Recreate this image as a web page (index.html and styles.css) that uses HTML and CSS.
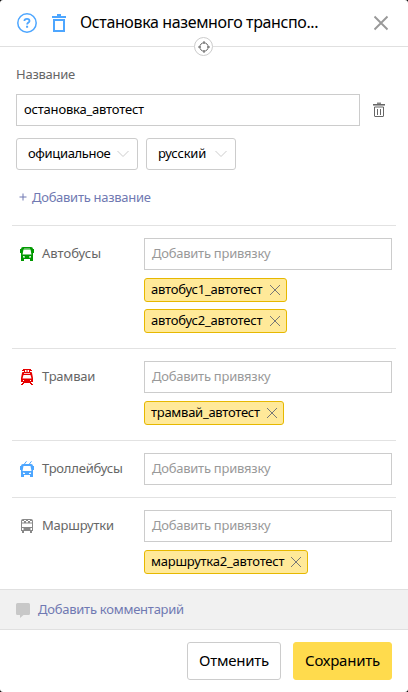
FILE: index.html
```html
<!DOCTYPE html>
<html lang="ru">
<head>
<meta charset="utf-8">
<title>Остановка</title>
<link rel="stylesheet" href="styles.css">
</head>
<body>
<svg class="defs" width="0" height="0">
  <symbol id="cross" viewBox="0 0 12 12"><path d="M1 1l10 10M11 1L1 11" fill="none" stroke="currentColor"/></symbol>
  <symbol id="chevron" viewBox="0 0 12 8"><path d="M.5 1L6 6.500 11.500 1" fill="none" stroke="currentColor"/></symbol>
</svg>
<main class="panel">
  <header class="header">
    <svg class="help" width="20" height="20" viewBox="0 0 20 20"><circle cx="10" cy="10" r="9.200" fill="none" stroke="currentColor" stroke-width="1.500"/><path d="M7.400 8C7.400 6.600 8.400 5.800 10 5.800s2.500.8 2.500 2.100c0 1.700-2.400 1.700-2.400 3.700" fill="none" stroke="currentColor" stroke-width="1.800"/><path d="M9.100 12.800h2v2h-2z" fill="currentColor"/></svg>
    <svg class="trash" width="14" height="18" viewBox="0 0 14 18"><path d="M0 2h5V0h4v2h5v2H0zM1 5h12v13H1zM3 7v9h8V7z" fill="currentColor" fill-rule="evenodd"/></svg>
    <h1 class="title">Остановка наземного транспо...</h1>
    <svg class="close" width="16" height="16" viewBox="0 0 16 16"><path d="M1.500 1.500l13 13M14.500 1.500l-13 13" stroke="currentColor" stroke-width="1.900"/></svg>
    <span class="target"><svg width="12" height="12" viewBox="0 0 12 12" fill="none" stroke="currentColor"><circle cx="6" cy="6" r="4.200"/><path d="M6 0v3M6 9v3M0 6h3M9 6h3"/></svg></span>
  </header>

  <section class="names">
    <div class="caption">Название</div>
    <div class="name-row">
      <div class="input name">остановка_автотест</div>
      <svg class="remove" width="12" height="16" viewBox="0 0 12 16"><path d="M4 .5h4V2H4z" fill="#888"/><path d="M0 2h12v1H0z" fill="#666"/><path d="M0 3h12v1H0z" fill="#aaa"/><path d="M1.500 5v9q0 .5.500.5h8q.5 0 .5-.5V5zM4.500 7v6M7.500 7v6" fill="none" stroke="#666"/></svg>
    </div>
    <div class="selects">
      <div class="select select-type"><span>официальное</span><svg width="12" height="8"><use href="#chevron"/></svg></div>
      <div class="select select-lang"><span>русский</span><svg width="12" height="8"><use href="#chevron"/></svg></div>
    </div>
    <div class="add"><svg width="8" height="8" viewBox="0 0 8 8"><path d="M4 .5v7M.5 4h7" stroke="currentColor"/></svg><span>Добавить название</span></div>
  </section>

  <section class="routes">
    <div class="route">
      <div class="kind"><svg class="bus" width="14" height="14" viewBox="0 0 14 14"><path fill="currentColor" fill-rule="evenodd" d="M3 0h8q2 0 2 2h1v4h-1v1.500V14h-3v-2H4v2H1V6H0V2h1q0-2 2-2zM3.500 2.500L2.500 7.500h9l-1-5zM3 9v1.500h2V9.500zM11 9L9 9.500v1h2z"/><path d="M4 1h6v.6H4z" fill="#fff" fill-opacity=".7"/></svg><span class="bus-label">Автобусы</span></div>
      <div class="links">
        <div class="input hint">Добавить привязку</div>
        <div class="tags"><span class="tag tag-bus"><span>автобус1_автотест</span><svg width="12" height="12"><use href="#cross"/></svg></span><span class="tag tag-bus"><span>автобус2_автотест</span><svg width="12" height="12"><use href="#cross"/></svg></span></div>
      </div>
    </div>
    <div class="route">
      <div class="kind"><svg class="tram" width="14" height="16" viewBox="0 0 14 16"><path fill="currentColor" fill-rule="evenodd" d="M3 0h8v1h1v1h-2v1h1.500l.5 1 1 5v4h-2v1h1v1h1v1h-2v-1h-1v-1H4v1H3v1H1v-1h1v-1h1v-1H1V9l1-5 .5-1H4V2H2V1h1zM5 1v2h1.500V1zM7.500 1v2H9V1zM4 4.300v.7h6v-.7zM3.500 6L2.500 9.500h9l-1-3.500zM3 11v1h1v-1zM10 11v1h1v-1z"/></svg><span>Трамваи</span></div>
      <div class="links">
        <div class="input hint">Добавить привязку</div>
        <div class="tags"><span class="tag tag-tram"><span>трамвай_автотест</span><svg width="12" height="12"><use href="#cross"/></svg></span></div>
      </div>
    </div>
    <div class="route">
      <div class="kind"><svg class="trolley" width="14" height="16" viewBox="0 0 14 16"><path fill="currentColor" fill-rule="evenodd" d="M3 3h8q2 0 2 2h1v4h-1v7h-3v-2H4v2H1V9H0V5h1q0-2 2-2zM3.500 5L2.500 10h9l-1-5zM3 11.500V13h2v-1zM11 11.500L9 12v1h2z"/><path d="M4 3.500L6.500.3M9 3.500L11.500.3" stroke="currentColor"/></svg><span>Троллейбусы</span></div>
      <div class="links"><div class="input hint">Добавить привязку</div></div>
    </div>
    <div class="route">
      <div class="kind"><svg class="minibus" width="14" height="14" viewBox="0 0 14 14"><path fill="currentColor" fill-rule="evenodd" d="M3 0h8q2 0 2 2v10h-1v2h-2v-2H4v2H2v-2H1V2q0-2 2-2zM2 2v1.500h2V2zM4 1v1h2V1zM8 1v1h2V1zM6 2v1.500h2V2zM10 2v1.500h2V2zM2 4.500V8h10V4.500zM2 9v2h1.500V9zM10.500 9v2H12V9z"/></svg><span>Маршрутки</span></div>
      <div class="links">
        <div class="input hint">Добавить привязку</div>
        <div class="tags"><span class="tag tag-mini"><span>маршрутка2_автотест</span><svg width="12" height="12"><use href="#cross"/></svg></span></div>
      </div>
    </div>
  </section>

  <div class="comment"><svg width="14" height="15" viewBox="0 0 14 15"><path d="M1.500 0h11Q14 0 14 1.500v9q0 1.500-1.500 1.500H7.500L4 15v-3H1.500Q0 12 0 10.500v-9Q0 0 1.500 0z" fill="#c8c8c8"/></svg><span>Добавить комментарий</span></div>
  <footer class="actions">
    <button class="button cancel">Отменить</button>
    <button class="button save">Сохранить</button>
  </footer>
</main>
</body>
</html>
```
FILE: styles.css
```css
* { box-sizing: border-box; }
body { margin: 0; background: #000; font: 13px/18px "Noto Sans", sans-serif; letter-spacing: -.2px; color: #000; }
svg { display: block; flex: none; }
.defs { position: absolute; }
.panel { width: 408px; height: 692px; background: #fff; border-radius: 3px; overflow: hidden; white-space: nowrap; }
.header { position: relative; display: flex; align-items: center; height: 47px; padding: 0 19px 0 17px; border-bottom: 1px solid #e0e0e0; }
.help, .trash { color: #4da6ff; }
.trash { margin: -1px 0 0 15px; }
.title { flex: 1; margin: -2px 0 0 14px; font-size: 16px; line-height: 20px; font-weight: 400; letter-spacing: -.37px; }
.close { color: #999; }
.target { position: absolute; left: 194px; top: 37px; display: flex; align-items: center; justify-content: center; width: 19px; height: 19px; border: 1px solid #ccc; border-radius: 50%; background: #fff; color: #666; }
.names { height: 178px; padding: 18px 16px 0; }
.caption { height: 29px; color: #666; letter-spacing: -.25px; }
.name-row { display: flex; align-items: center; gap: 13px; }
.name-row .input { width: 344px; }
.input { height: 32px; padding: 5px 7px; border: 1px solid #ccc; }
.hint { color: #999; letter-spacing: -.25px; }
.selects { display: flex; gap: 8px; margin-top: 12px; }
.select { display: flex; align-items: center; justify-content: space-between; height: 32px; padding: 0 8px 2px 11px; border: 1px solid #ccc; border-radius: 3px; }
.select svg { color: #ccc; margin-top: 2px; }
.select-type { width: 122px; letter-spacing: -.35px; }
.select-lang { width: 90px; }
.add { display: flex; align-items: center; gap: 5px; margin: 18px 0 0 3px; color: #7079b2; letter-spacing: -.28px; }
.routes { padding: 0 12px; }
.route { display: flex; padding: 12px 4px; border-top: 1px solid #e2e2e2; }
.kind { display: flex; align-items: center; gap: 8px; width: 128px; height: 32px; padding-left: 4px; color: #666; }
.kind span { margin-top: -2px; }
.bus-label { letter-spacing: 0; }
.bus { color: #090; }
.tram { color: #e60000; }
.trolley { color: #4da6ff; }
.minibus { color: #888; }
.links { width: 248px; }
.tags { display: flex; flex-direction: column; align-items: flex-start; gap: 7px; margin: 8px 0 3px; }
.tag { display: flex; align-items: center; justify-content: space-between; height: 24px; padding: 0 5px 0 6px; border: 1px solid #e6b800; border-radius: 3px; background: #ffe999; }
.tag span { margin-top: -2px; }
.tag svg { color: #777; }
.tag-bus { width: 143px; }
.tag-tram { width: 140px; letter-spacing: -.27px; }
.tag-mini { width: 164px; letter-spacing: -.22px; }
.comment { display: flex; align-items: center; gap: 8px; height: 41px; padding-left: 16px; border: solid #e0e0e0; border-width: 1px 0; background: #f1f1f1; color: #7079b2; letter-spacing: -.25px; }
.comment span { margin-top: -2px; }
.comment svg { margin-top: 1px; }
.actions { display: flex; justify-content: flex-end; gap: 12px; padding: 12px 16px; }
.button { height: 38px; padding: 0 0 2px; border: 1px solid #ccc; border-radius: 3px; background: #fff; font: 15px/20px "Noto Sans", sans-serif; letter-spacing: -.25px; color: #000; }
.cancel { width: 94px; }
.save { width: 99px; border-color: #ffdb4d; background: #ffdb4d; }
```
